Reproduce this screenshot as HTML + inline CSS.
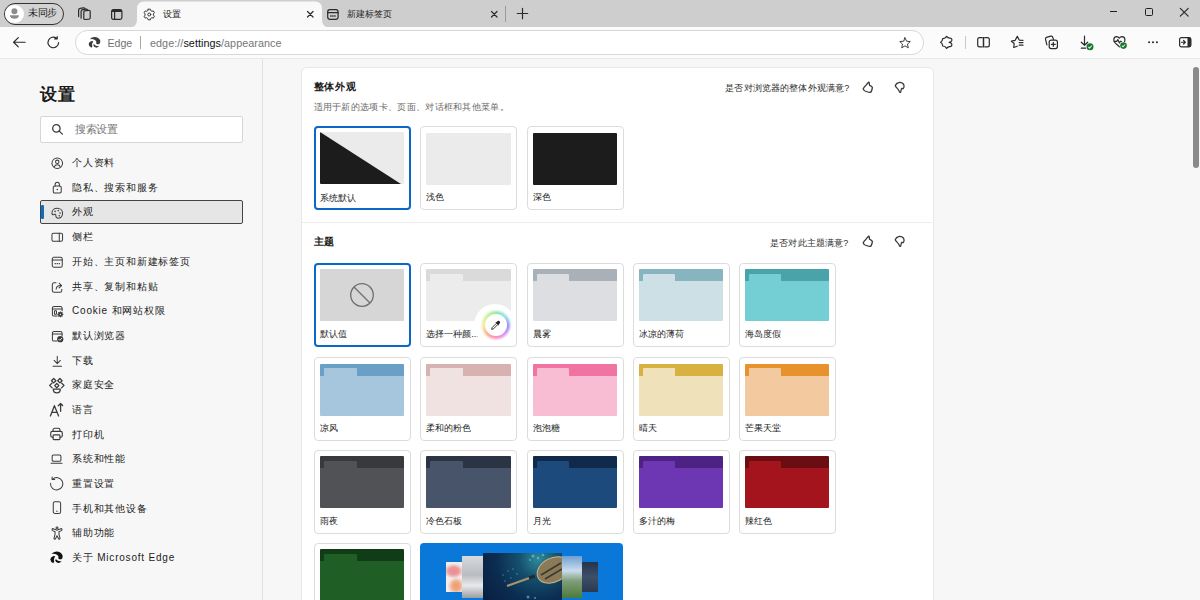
<!DOCTYPE html>
<html><head><meta charset="utf-8"><style>
*{box-sizing:border-box;margin:0;padding:0}
html,body{width:1200px;height:600px;overflow:hidden}
body{position:relative;background:#f7f7f7;font-family:"Liberation Sans",sans-serif;color:#242424}
.a{position:absolute}
svg{position:absolute;overflow:visible}
#tabstrip{left:0;top:0;width:1200px;height:27px;background:#cecece}
#toolbar{left:0;top:27px;width:1200px;height:31.8px;background:#fbfbfb;border-bottom:1px solid #e8e8e8}
#sidebar{left:0;top:58.5px;width:263px;height:542px;background:#f7f7f7;border-right:1px solid #e0e0e0}
.nt{position:absolute;left:72px;font-size:10px;letter-spacing:0.8px;line-height:14px;color:#1c1c1c;white-space:nowrap}
.ni{left:50.5px;width:12.5px;height:12.5px}
.s{fill:none;stroke:#3b3b3b;stroke-width:1.3;stroke-linecap:round;stroke-linejoin:round}
.f{fill:#3b3b3b}
#card{left:300.5px;top:67px;width:633px;height:600px;background:#fff;border:1px solid #e8e8e8;border-radius:6px}
.tc{position:absolute;width:97px;height:84px;border:1px solid #dcdcdc;border-radius:4px;background:#fff}
.tc .pv{position:absolute;left:5px;top:5.5px;width:84.3px;height:52px;border-radius:1px;overflow:hidden}
.tc .lb{position:absolute;left:5px;top:64px;font-size:9px;line-height:12px;color:#222;white-space:nowrap}
.tc.sel{border:2.3px solid #0b68c8}
.tc.sel .pv{left:3.7px;top:4.2px}
.tc.sel .lb{left:3.7px;top:63.3px}
.bar{position:absolute;left:0;top:0;width:100%;height:12px}
.tab{position:absolute;left:4px;top:4.5px;width:32.8px;height:8px;border-radius:1.2px 1.2px 0 0}
.body{position:absolute;left:0;top:12px;width:100%;height:40px}
.tb{fill:none;stroke:#2b2b2b;stroke-width:1.2;stroke-linecap:round;stroke-linejoin:round}
</style></head><body>
<div id="tabstrip" class="a"></div>
<svg style="left:129px;top:0" width="202" height="27" viewBox="0 0 202 27"><path d="M0 27.5 Q8 27.5 8 19.5 V9 Q8 1.5 15.5 1.5 H186 Q193 1.5 193 9 V19.5 Q193 27.5 201 27.5 Z" fill="#f9f9f9"/></svg>
<div id="toolbar" class="a"></div>
<div class="a" style="left:4px;top:2.8px;width:60.3px;height:22px;border:1.4px solid #333;border-radius:11px;background:#d3d3d3"></div>
<div class="a" style="left:5.2px;top:4.6px;width:18.5px;height:18.5px;border-radius:50%;background:#fff"></div>
<svg style="left:5.2px;top:4.6px" width="18.5" height="18.5" viewBox="0 0 18.5 18.5"><circle cx="9.4" cy="6.3" r="3" fill="#8b8b8b"/><path d="M4.9 10.3 H13.9 Q13.9 13.7 9.4 13.7 Q4.9 13.7 4.9 10.3 Z" fill="#8b8b8b"/></svg>
<div class="a" style="left:28.3px;top:6.3px;font-size:10px;letter-spacing:-0.6px;line-height:14px;color:#1a1a1a">未同步</div>
<svg style="left:74px;top:4px" width="22" height="20" viewBox="0 0 22 20"><path class="tb" stroke-width="1.15" d="M4.6 12.6 V6.2 Q4.6 4.6 6.2 4.3 L9.4 3.8 Q10.6 3.7 11 4.6"/><path class="tb" stroke-width="1.15" d="M7.1 14.2 V7.6 Q7.1 6 8.7 5.7 L12 5.2 Q13.1 5.1 13.6 6"/><path class="tb" stroke-width="1.25" d="M10.4 6.9 L14.8 6.4 Q16.2 6.3 16.2 7.7 V13.7 Q16.2 14.9 15 15.1 L11.2 15.5 Q9.8 15.6 9.8 14.3 V8.2 Q9.8 7 10.4 6.9 Z"/></svg>
<svg style="left:111px;top:8.5px" width="11.5" height="11" viewBox="0 0 11.5 11"><rect class="tb" x="0.6" y="0.6" width="10.3" height="9.8" rx="1.8" stroke-width="1.2"/><path d="M0.6 2.6 Q0.6 0.6 2.4 0.6 H9.1 Q10.9 0.6 10.9 2.6 V3 H0.6 Z" fill="#2b2b2b"/><path class="tb" d="M3.6 3 V10.4"/></svg>
<svg style="left:143px;top:8px" width="12.5" height="13" viewBox="0 0 16 16"><path class="tb" stroke-width="1.6" d="M6.6 1.2 H9.4 L9.9 3 L11.4 3.9 L13.2 3.4 L14.6 5.8 L13.3 7.2 V8.8 L14.6 10.2 L13.2 12.6 L11.4 12.1 L9.9 13 L9.4 14.8 H6.6 L6.1 13 L4.6 12.1 L2.8 12.6 L1.4 10.2 L2.7 8.8 V7.2 L1.4 5.8 L2.8 3.4 L4.6 3.9 L6.1 3 Z"/><circle class="tb" cx="8" cy="8" r="1.9" stroke-width="1.6"/></svg>
<div class="a" style="left:163px;top:8px;font-size:9px;line-height:13px;color:#1f1f1f">设置</div>
<svg style="left:307px;top:11px" width="6.5" height="6.5" viewBox="0 0 6.5 6.5"><path class="tb" stroke-width="1.2" d="M0.5 0.5 L6 6 M6 0.5 L0.5 6"/></svg>
<svg style="left:327.2px;top:8.5px" width="11.8" height="11" viewBox="0 0 11.8 11"><rect class="tb" x="0.7" y="0.7" width="10.4" height="9.6" rx="2.2" stroke-width="1.3"/><path class="tb" d="M0.7 3.7 H11.1" stroke-width="1.1"/><path d="M3.2 7 H8.6" stroke="#2b2b2b" stroke-width="1.4" stroke-dasharray="1.4 0.6"/></svg>
<div class="a" style="left:346.5px;top:8px;font-size:9px;line-height:13px;color:#1f1f1f">新建标签页</div>
<svg style="left:490.7px;top:11px" width="6.5" height="6.5" viewBox="0 0 6.5 6.5"><path class="tb" stroke-width="1.2" d="M0.5 0.5 L6 6 M6 0.5 L0.5 6"/></svg>
<div class="a" style="left:505.3px;top:6.3px;width:1px;height:15.7px;background:#9a9a9a"></div>
<svg style="left:517px;top:8px" width="11" height="11" viewBox="0 0 11 11"><path class="tb" stroke-width="1.2" d="M5.5 0.3 V10.7 M0.3 5.5 H10.7"/></svg>
<div class="a" style="left:1109.5px;top:11px;width:7.5px;height:1.2px;background:#1f1f1f"></div>
<div class="a" style="left:1145px;top:7.5px;width:8px;height:8px;border:1.2px solid #1f1f1f;border-radius:1.5px"></div>
<svg style="left:1180px;top:7.5px" width="8.5" height="8.5" viewBox="0 0 8.5 8.5"><path class="tb" stroke="#1f1f1f" stroke-width="1.1" d="M0.3 0.3 L8.2 8.2 M8.2 0.3 L0.3 8.2"/></svg>
<svg style="left:13px;top:37px" width="12.5" height="10.5" viewBox="0 0 12.5 10.5"><path class="tb" stroke-width="1.2" d="M12.2 5.25 H0.8 M5.3 0.6 L0.6 5.25 L5.3 9.9"/></svg>
<svg style="left:47px;top:36.2px" width="13" height="12.5" viewBox="0 0 13 12.5"><path class="tb" stroke-width="1.2" d="M11.6 6.5 A5.3 5.3 0 1 1 9.5 2.2 M10.2 0.5 V2.9 H7.7"/></svg>
<div class="a" style="left:75px;top:30.3px;width:849px;height:24.4px;background:#fff;border:1px solid #d8d8d8;border-radius:12.2px"></div>
<svg style="left:88.3px;top:35.7px" width="13" height="13" viewBox="0 0 16 16"><path d="M2.2 4 Q4.5 1.1 8 1.1 Q13.2 1.3 15.1 5.6 Q15.5 8.5 13.7 9.9 Q11.8 10.6 10.2 9.4 Q11 6.4 8.6 4.9 Q5.6 3.3 2.2 4 Z" fill="#3b3b3b"/><path d="M4.4 6.2 Q0.9 7.4 0.8 10.2 Q1 12.8 4.4 14.6 Q4.3 13.8 5.3 13.3 Q4.2 9.7 6.5 6.6 Q5.5 6.2 4.4 6.2 Z" fill="#3b3b3b"/><path d="M6.4 11.2 Q7 13.9 9.8 14.3 Q12.4 14.5 13.9 12.1 Q11.6 12.6 9.8 11.9 Q8.1 11.3 7.4 9.8 Z" fill="#3b3b3b"/></svg>
<div class="a" style="left:107.5px;top:35.8px;font-size:10.6px;line-height:15px;color:#707070">Edge</div>
<div class="a" style="left:140px;top:36px;width:1.2px;height:12.5px;background:#a8a8a8"></div>
<div class="a" style="left:150px;top:35.5px;font-size:10.8px;letter-spacing:0.05px;line-height:15px;color:#767676;white-space:nowrap">edge://<span style="color:#111">settings</span>/appearance</div>
<svg style="left:899px;top:37px" width="12" height="12" viewBox="0 0 16 16"><path class="tb" stroke="#555" stroke-width="1.2" d="M8 1 L10.1 5.6 L15 6.1 L11.3 9.4 L12.4 14.4 L8 11.8 L3.6 14.4 L4.7 9.4 L1 6.1 L5.9 5.6 Z"/></svg>
<svg style="left:936px;top:32px" width="20" height="20" viewBox="0 0 20 20"><path class="tb" stroke-width="1.3" d="M4.6 10.3 Q6.6 9.2 6.7 6.6 Q9.1 6.9 10.6 4.3 Q12 6.3 14.2 6 Q16.4 6.6 15.7 8.7 Q15.2 10 13.2 10.3 Q15.2 10.6 15.7 11.9 Q16.4 14 14.2 14.6 Q12 14.3 10.6 16.4 Q9.1 13.8 6.7 14 Q6.6 11.4 4.6 10.3 Z"/></svg>
<div class="a" style="left:964.5px;top:36px;width:1.2px;height:12.5px;background:#c8c8c8"></div>
<svg style="left:976.5px;top:37px" width="13" height="10.5" viewBox="0 0 13 10.5"><path class="tb" stroke-width="1.25" d="M5.2 0.7 H2.6 Q0.7 0.7 0.7 2.6 V7.9 Q0.7 9.8 2.6 9.8 H5.2 M7.8 0.7 H10.4 Q12.3 0.7 12.3 2.6 V7.9 Q12.3 9.8 10.4 9.8 H7.8"/><path d="M6.5 0 V10.5" stroke="#2b2b2b" stroke-width="1.5"/></svg>
<svg style="left:1007px;top:32px" width="22" height="20" viewBox="0 0 22 20"><path class="tb" stroke-width="1.25" d="M10.2 14.2 L6.7 15.5 L7.2 11.5 L4.4 9.2 L8.2 8.3 L10.3 4.4 L12.4 8.2 L16 8.3"/><path class="tb" stroke-width="1.25" stroke-linecap="butt" d="M12.2 10.6 H16 M12.2 13.2 H16"/></svg>
<svg style="left:1040px;top:32px" width="22" height="20" viewBox="0 0 22 20"><path class="tb" stroke-width="1.25" d="M6.9 12.9 L5.5 7.1 Q5.2 5.8 6.5 5.4 L10.8 4.2 Q12 3.9 12.6 5 L13.5 7.4"/><rect class="tb" stroke-width="1.3" x="9.2" y="8.1" width="8.2" height="8.5" rx="2"/><path class="tb" stroke-width="1.25" d="M13.3 10.4 V14.3 M11.35 12.35 H15.25"/></svg>
<svg style="left:1076px;top:32px" width="22" height="20" viewBox="0 0 22 20"><path class="tb" stroke-width="1.25" d="M8.5 4.2 V13.2 M5.3 10.2 L8.5 13.3 L11.7 10.2 M5.3 16.2 H9.6"/><circle cx="14" cy="14.8" r="3.5" fill="#1f7433"/><path d="M12.3 14.9 L13.5 16.1 L15.8 13.6" stroke="#c4f5cb" stroke-width="1.1" fill="none"/></svg>
<svg style="left:1112.5px;top:36px" width="14" height="13" viewBox="0 0 14 13"><path class="tb" stroke-width="1.25" d="M6.3 10.8 L1.9 6.6 Q0.6 5.2 0.8 3.4 Q1.2 0.8 3.7 0.7 Q5.4 0.7 6.3 2.2 Q7.3 0.7 9 0.7 Q11.6 0.8 11.9 3.4 Q12 4.5 11.6 5.5"/><path class="tb" stroke-width="1.1" d="M1.2 5.3 H3.7 L4.8 3.6 L6.4 7 L7.4 5.3 H8.4"/><circle cx="10.5" cy="9.6" r="3.3" fill="#1f7433"/><path d="M8.9 9.7 L10 10.8 L12.1 8.5" stroke="#c4f5cb" stroke-width="1.1" fill="none"/></svg>
<svg style="left:1147.5px;top:41.3px" width="10" height="2.5" viewBox="0 0 10 2.5"><circle cx="1.1" cy="1.2" r="1.05" fill="#2b2b2b"/><circle cx="5" cy="1.2" r="1.05" fill="#2b2b2b"/><circle cx="8.9" cy="1.2" r="1.05" fill="#2b2b2b"/></svg>
<svg style="left:1178.7px;top:37.3px" width="12.5" height="10.5" viewBox="0 0 12.5 10.5"><rect class="tb" stroke-width="1.2" x="0.6" y="0.6" width="11.3" height="9.3" rx="1.8"/><path d="M8.5 0.6 H10.1 Q11.9 0.6 11.9 2.4 V8.1 Q11.9 9.9 10.1 9.9 H8.5 Z" fill="#2b2b2b"/><path class="tb" stroke-width="1.1" d="M2.5 5.25 H6.3 M4.6 3.5 L6.3 5.25 L4.6 7"/></svg>
<div id="sidebar" class="a"></div>
<div class="a" style="left:40px;top:83px;font-size:17px;letter-spacing:0.8px;line-height:23px;font-weight:bold;color:#1a1a1a">设置</div>
<div class="a" style="left:39.5px;top:116px;width:203.7px;height:26.5px;background:#fff;border:1px solid #d6d6d6;border-radius:2px"></div>
<svg style="left:51.6px;top:124.3px" width="11" height="10.5" viewBox="0 0 11 10.5"><circle cx="4.4" cy="4.4" r="3.7" class="s" stroke-width="1.25"/><path d="M7.2 7.1 L10.4 10.1" class="s" stroke-width="1.25"/></svg>
<div class="a" style="left:75px;top:121.5px;font-size:11px;letter-spacing:-0.5px;line-height:14px;color:#777">搜索设置</div>
<div class="a" style="left:40px;top:200.2px;width:203px;height:23.4px;background:#e6e6e6;border:1.5px solid #444;border-radius:2px"></div>
<div class="a" style="left:41.2px;top:204.8px;width:2.5px;height:14.6px;background:#0f6cbd;border-radius:1px"></div>
<div class="nt" style="top:156.10px">个人资料</div>
<svg class="ni" style="top:157.35px" viewBox="0 0 16 16"><circle class="s" cx="8" cy="8" r="6.8"/><circle class="s" cx="8" cy="6.2" r="2.2"/><path class="s" d="M4.2 12.6 Q5 10 8 10 Q11 10 11.8 12.6"/></svg>
<div class="nt" style="top:180.79px">隐私、搜索和服务</div>
<svg class="ni" style="top:182.04px" viewBox="0 0 16 16"><path class="s" d="M5.3 5.2 V3 A2.7 2.7 0 0 1 10.7 3 V5.2"/><rect class="s" x="2.9" y="5.2" width="10.2" height="8.8" rx="1.8"/><circle class="f" cx="8" cy="9.6" r="1"/></svg>
<div class="nt" style="top:205.48px">外观</div>
<svg class="ni" style="top:206.73px" viewBox="0 0 16 16"><path class="s" d="M8 1.6 C4 1.6 1.2 4.2 1.2 7.6 C1.2 9.6 2.4 10.2 3.6 9.6 C4.9 8.9 6.2 9.3 6.2 10.8 C6.2 13.3 7.6 14.6 9.6 14.4 C12.6 14 14.8 11.3 14.8 8 C14.8 4.2 11.8 1.6 8 1.6 Z"/><circle class="f" cx="5.2" cy="5.6" r="1"/><circle class="f" cx="9.2" cy="4.6" r="1"/><circle class="f" cx="11.6" cy="7.8" r="1"/><circle class="f" cx="10.6" cy="11.2" r="1"/></svg>
<div class="nt" style="top:230.17px">侧栏</div>
<svg class="ni" style="top:231.42px" viewBox="0 0 16 16"><rect class="s" x="1.2" y="2.8" width="13.6" height="10.4" rx="2"/><path class="s" d="M10.6 2.8 V13.2"/></svg>
<div class="nt" style="top:254.86px">开始、主页和新建标签页</div>
<svg class="ni" style="top:256.11px" viewBox="0 0 16 16"><rect class="s" x="1.6" y="1.6" width="12.8" height="12.8" rx="2.2"/><path class="s" d="M1.6 5.2 H14.4"/><path d="M4.6 9.6 H11.4" stroke="#3b3b3b" stroke-width="1.6" stroke-dasharray="1.6 1"/></svg>
<div class="nt" style="top:279.55px">共享、复制和粘贴</div>
<svg class="ni" style="top:280.80px" viewBox="0 0 16 16"><path class="s" d="M6.4 2.2 H4 A2.3 2.3 0 0 0 1.7 4.5 V12 A2.3 2.3 0 0 0 4 14.3 H11.5 A2.3 2.3 0 0 0 13.8 12 V10.6"/><path class="s" d="M6.6 10.4 C6.8 7.2 8.8 5.8 12.6 5.8"/><path class="s" d="M10.4 2.8 L13.6 5.8 L10.4 8.8"/></svg>
<div class="nt" style="top:304.24px">Cookie 和网站权限</div>
<svg class="ni" style="top:305.49px" viewBox="0 0 16 16"><path class="s" d="M8 14.2 H4 A2.2 2.2 0 0 1 1.8 12 V4 A2.2 2.2 0 0 1 4 1.8 H12 A2.2 2.2 0 0 1 14.2 4 V7.4"/><path class="s" d="M1.8 5 H14.2"/><rect class="s" x="4.4" y="7.4" width="2.6" height="4.4" rx="0.6"/><circle class="f" cx="12" cy="12" r="2.9"/><circle cx="12" cy="12" r="1" fill="#f7f7f7"/><path d="M12 8.2 V15.8 M8.2 12 H15.8 M9.3 9.3 L14.7 14.7 M14.7 9.3 L9.3 14.7" stroke="#3b3b3b" stroke-width="1.3"/><circle class="f" cx="12" cy="12" r="2.4"/><circle cx="12" cy="12" r="0.9" fill="#f7f7f7"/></svg>
<div class="nt" style="top:328.93px">默认浏览器</div>
<svg class="ni" style="top:330.18px" viewBox="0 0 16 16"><path class="s" d="M7.6 14.2 H4 A2.2 2.2 0 0 1 1.8 12 V4 A2.2 2.2 0 0 1 4 1.8 H12 A2.2 2.2 0 0 1 14.2 4 V7.4"/><path class="s" d="M1.8 5 H14.2"/><circle class="f" cx="11.8" cy="11.8" r="4"/><path d="M10 11.9 L11.3 13.2 L13.7 10.6" stroke="#f7f7f7" stroke-width="1.2" fill="none" stroke-linecap="round"/></svg>
<div class="nt" style="top:353.62px">下载</div>
<svg class="ni" style="top:354.87px" viewBox="0 0 16 16"><path class="s" d="M8 1.5 V11 M4 7 L8 11 L12 7 M2.5 14.5 H13.5"/></svg>
<div class="nt" style="top:378.31px">家庭安全</div>
<svg style="left:46px;top:373.81px" width="22" height="24" viewBox="0 0 22 24"><g class="s" stroke-width="1.15" transform="translate(0 1.6)"><path d="M7.7 2.9 L9.9 5.1 L7.7 7.3 L5.5 5.1 Z"/><path d="M13.9 2.9 L16.1 5.1 L13.9 7.3 L11.7 5.1 Z"/><path d="M10.8 7.9 L12.9 10 L10.8 12.1 L8.7 10 Z"/><path d="M5.9 7.6 L3.6 9.8 L6.1 12.3 M15.7 7.6 L18 9.8 L15.5 12.3"/><path d="M7.3 13.6 H14.3 Q14.3 17.2 10.8 17.2 Q7.3 17.2 7.3 13.6 Z"/></g></svg>
<div class="nt" style="top:403.00px">语言</div>
<svg style="left:46px;top:398.50px" width="22" height="24" viewBox="0 0 22 24"><g class="s" stroke-width="1.15" transform="translate(0 -0.7)"><path d="M4.4 17.6 L8.4 7.4 L12.6 17.6 M5.9 14 H11.1"/><path d="M14.6 13 V5.4 M12.3 7.4 L14.6 5.2 L16.6 7.2"/></g></svg>
<div class="nt" style="top:427.69px">打印机</div>
<svg class="ni" style="top:428.94px" viewBox="0 0 16 16"><g transform="translate(-1.9 -2.6) scale(1.12)"><path class="s" d="M4 5 V3.5 A2 2 0 0 1 6 1.5 H10 A2 2 0 0 1 12 3.5 V5"/><path class="s" d="M4 11.8 H3.2 A1.8 1.8 0 0 1 1.4 10 V6.8 A1.8 1.8 0 0 1 3.2 5 H12.8 A1.8 1.8 0 0 1 14.6 6.8 V10 A1.8 1.8 0 0 1 12.8 11.8 H12"/><rect class="s" x="4" y="9" width="8" height="5.5" rx="1.2"/></g></svg>
<div class="nt" style="top:452.38px">系统和性能</div>
<svg class="ni" style="top:453.63px" viewBox="0 0 16 16"><g transform="translate(-0.9 -1.7)"><rect class="s" x="2.4" y="3" width="11.2" height="8" rx="1.6"/><path class="s" d="M1 13.4 H15"/></g></svg>
<div class="nt" style="top:477.07px">重置设置</div>
<svg class="ni" style="top:478.32px" viewBox="0 0 16 16"><path class="s" stroke-width="1.3" d="M1.9 1.6 A7.9 7.9 0 1 1 -0.6 6.6"/><path class="s" stroke-width="1.3" d="M1.4 -1.3 V1.9 H4.7"/></svg>
<div class="nt" style="top:501.76px">手机和其他设备</div>
<svg class="ni" style="top:503.01px" viewBox="0 0 16 16"><rect class="s" stroke-width="1.35" x="2.9" y="-1.6" width="9.4" height="15" rx="2.3"/><circle class="f" cx="7.6" cy="10.6" r="0.9"/></svg>
<div class="nt" style="top:526.45px">辅助功能</div>
<svg class="ni" style="top:527.70px" viewBox="0 0 16 16"><path class="s" stroke-width="1.4" d="M2.2 0.6 Q4 1.9 6.1 1.9 Q6.8 3 7.7 3 Q8.6 3 9.3 1.9 Q11.4 1.9 13.2 0.6 Q14.4 1 14 2.6 Q12.2 4.1 10.2 4.6 L10.3 8.6 L11.6 13.2 Q11.2 14.6 9.8 14.2 L7.7 10 L5.6 14.2 Q4.2 14.6 3.8 13.2 L5.1 8.6 L5.2 4.6 Q3.2 4.1 1.4 2.6 Q1 1 2.2 0.6 Z"/><circle class="s" stroke-width="1.1" cx="7.7" cy="-0.1" r="1.25"/></svg>
<div class="nt" style="top:551.14px">关于 Microsoft Edge</div>
<svg style="left:46px;top:546.64px" width="22" height="24" viewBox="0 0 22 24"><svg x="3.6" y="3.6" width="13.8" height="13.8" viewBox="0 0 16 16"><path d="M2.2 4 Q4.5 1.1 8 1.1 Q13.2 1.3 15.1 5.6 Q15.5 8.5 13.7 9.9 Q11.8 10.6 10.2 9.4 Q11 6.4 8.6 4.9 Q5.6 3.3 2.2 4 Z" fill="#111"/><path d="M4.4 6.2 Q0.9 7.4 0.8 10.2 Q1 12.8 4.4 14.6 Q4.3 13.8 5.3 13.3 Q4.2 9.7 6.5 6.6 Q5.5 6.2 4.4 6.2 Z" fill="#111"/><path d="M6.4 11.2 Q7 13.9 9.8 14.3 Q12.4 14.5 13.9 12.1 Q11.6 12.6 9.8 11.9 Q8.1 11.3 7.4 9.8 Z" fill="#111"/></svg></svg>
<div id="card" class="a"></div>
<div class="a" style="left:313.5px;top:80px;font-size:10px;letter-spacing:0.95px;line-height:14px;font-weight:bold;color:#1a1a1a">整体外观</div>
<div class="a" style="left:313.5px;top:101px;font-size:9px;letter-spacing:0.31px;line-height:12px;color:#6a6a6a">适用于新的选项卡、页面、对话框和其他菜单。</div>
<div class="a" style="right:350.70000000000005px;top:81.5px;font-size:9px;letter-spacing:0.15px;line-height:12px;color:#2e2e2e;white-space:nowrap">是否对浏览器的整体外观满意?</div>
<svg style="left:858px;top:77.6px" width="52" height="20" viewBox="0 0 52 20"><path class="s" stroke="#333" stroke-width="1.15" d="M10.8 4.1 Q11.7 4.7 11.4 6.6 L11.6 7.3 Q13.8 8 14.4 9.4 Q14.2 11.8 13.1 13.9 Q11.6 14.8 9.8 14 L7 13 Q5.2 12.3 5.2 10.6 Q6 9.2 8 7.2 Q9.8 5 10.8 4.1 Z"/><path class="s" stroke="#333" stroke-width="1.15" d="M37.3 7.4 Q38.6 4.9 41.5 4.4 Q44.6 4.3 45.8 6.8 Q46.6 9.4 45.3 10.6 L43.6 10.4 Q42.9 12.8 42.6 14.3 Q42 14.7 41.4 13.6 Q40.4 11.4 38.6 9.6 Q37.2 8.6 37.3 7.4 Z"/></svg>
<div class="a" style="left:302px;top:222px;width:630px;height:1px;background:#ececec"></div>
<div class="a" style="right:351.5px;top:237.2px;font-size:9px;letter-spacing:0.15px;line-height:12px;color:#2e2e2e;white-space:nowrap">是否对此主题满意?</div>
<svg style="left:858px;top:232px" width="52" height="20" viewBox="0 0 52 20"><path class="s" stroke="#333" stroke-width="1.15" d="M10.8 4.1 Q11.7 4.7 11.4 6.6 L11.6 7.3 Q13.8 8 14.4 9.4 Q14.2 11.8 13.1 13.9 Q11.6 14.8 9.8 14 L7 13 Q5.2 12.3 5.2 10.6 Q6 9.2 8 7.2 Q9.8 5 10.8 4.1 Z"/><path class="s" stroke="#333" stroke-width="1.15" d="M37.3 7.4 Q38.6 4.9 41.5 4.4 Q44.6 4.3 45.8 6.8 Q46.6 9.4 45.3 10.6 L43.6 10.4 Q42.9 12.8 42.6 14.3 Q42 14.7 41.4 13.6 Q40.4 11.4 38.6 9.6 Q37.2 8.6 37.3 7.4 Z"/></svg>
<div class="a" style="left:313.5px;top:235px;font-size:10px;letter-spacing:0.95px;line-height:14px;font-weight:bold;color:#1a1a1a">主题</div>
<div class="tc sel" style="left:314px;top:126.3px"><div class="pv"><div style="position:absolute;inset:0;background:#ebebeb"></div><svg style="left:0;top:0" width="85" height="52"><path d="M0 0 L81 52 L0 52 Z" fill="#1c1c1c"/></svg></div><div class="lb">系统默认</div></div>
<div class="tc" style="left:420.3px;top:126.3px"><div class="pv"><div style="position:absolute;inset:0;background:#ebebeb"></div></div><div class="lb">浅色</div></div>
<div class="tc" style="left:526.5px;top:126.3px"><div class="pv"><div style="position:absolute;inset:0;background:#1c1c1c"></div></div><div class="lb">深色</div></div>
<div class="tc sel" style="left:314px;top:262.5px"><div class="pv"><div style="position:absolute;inset:0;background:#d6d6d6"></div><svg style="left:29.5px;top:13px" width="26" height="26" viewBox="0 0 26 26"><circle cx="13" cy="13" r="11.3" fill="none" stroke="#6e6e6e" stroke-width="1.3"/><path d="M5 5 L21 21" stroke="#6e6e6e" stroke-width="1.3"/></svg></div><div class="lb">默认值</div></div>
<div class="tc" style="left:420.3px;top:262.5px"><div class="pv"><div class="bar" style="background:#dadada"></div><div class="body" style="background:#ececec"></div><div class="tab" style="background:#ececec"></div></div><div class="lb">选择一种颜...</div><div style="position:absolute;left:53px;top:40px;width:42px;height:42px;border-radius:50%;background:#fff"></div><div style="position:absolute;left:60.5px;top:47px;width:28px;height:28px;border-radius:50%;background:conic-gradient(from 0deg,#8de8a6 0deg,#8ee0ee 50deg,#9a90f6 95deg,#da92f2 140deg,#ff8fb2 185deg,#ffac8c 225deg,#f7ee94 270deg,#c4f094 320deg,#8de8a6 360deg);filter:blur(1.2px)"></div><div style="position:absolute;left:63.5px;top:50px;width:22px;height:22px;border-radius:50%;background:#fff;filter:blur(0.4px)"></div><svg style="left:69px;top:56px" width="11" height="11" viewBox="0 0 16 16"><path d="M11 1.5 Q12.5 0.3 14 1.8 Q15.5 3.3 14.3 4.8 L12.6 6.5 L13.1 7 L12 8.1 L7.9 4 L9 2.9 L9.5 3.4 Z" fill="#222"/><path d="M9 5.1 L3 11.1 L2.4 13.6 L4.9 13 L10.9 7" fill="none" stroke="#222" stroke-width="1.3"/></svg></div>
<div class="tc" style="left:526.5px;top:262.5px"><div class="pv"><div class="bar" style="background:#aab0b7"></div><div class="body" style="background:#dcdee2"></div><div class="tab" style="background:#dcdee2"></div></div><div class="lb">晨雾</div></div>
<div class="tc" style="left:632.5px;top:262.5px"><div class="pv"><div class="bar" style="background:#86b5bf"></div><div class="body" style="background:#cde0e5"></div><div class="tab" style="background:#cde0e5"></div></div><div class="lb">冰凉的薄荷</div></div>
<div class="tc" style="left:738.6px;top:262.5px"><div class="pv"><div class="bar" style="background:#4aa3a8"></div><div class="body" style="background:#73cfd3"></div><div class="tab" style="background:#73cfd3"></div></div><div class="lb">海岛度假</div></div>
<div class="tc" style="left:314px;top:357.3px"><div class="pv"><div class="bar" style="background:#6a9fc7"></div><div class="body" style="background:#a6c6de"></div><div class="tab" style="background:#a6c6de"></div></div><div class="lb">凉风</div></div>
<div class="tc" style="left:420.3px;top:357.3px"><div class="pv"><div class="bar" style="background:#d8b2b0"></div><div class="body" style="background:#f0e2e1"></div><div class="tab" style="background:#f0e2e1"></div></div><div class="lb">柔和的粉色</div></div>
<div class="tc" style="left:526.5px;top:357.3px"><div class="pv"><div class="bar" style="background:#ef74a2"></div><div class="body" style="background:#f8bcd3"></div><div class="tab" style="background:#f8bcd3"></div></div><div class="lb">泡泡糖</div></div>
<div class="tc" style="left:632.5px;top:357.3px"><div class="pv"><div class="bar" style="background:#d8b140"></div><div class="body" style="background:#efe2bb"></div><div class="tab" style="background:#efe2bb"></div></div><div class="lb">晴天</div></div>
<div class="tc" style="left:738.6px;top:357.3px"><div class="pv"><div class="bar" style="background:#e8922e"></div><div class="body" style="background:#f3caa0"></div><div class="tab" style="background:#f3caa0"></div></div><div class="lb">芒果天堂</div></div>
<div class="tc" style="left:314px;top:449.5px"><div class="pv"><div class="bar" style="background:#37393d"></div><div class="body" style="background:#505256"></div><div class="tab" style="background:#505256"></div></div><div class="lb">雨夜</div></div>
<div class="tc" style="left:420.3px;top:449.5px"><div class="pv"><div class="bar" style="background:#2b3444"></div><div class="body" style="background:#475469"></div><div class="tab" style="background:#475469"></div></div><div class="lb">冷色石板</div></div>
<div class="tc" style="left:526.5px;top:449.5px"><div class="pv"><div class="bar" style="background:#11294b"></div><div class="body" style="background:#1d4a7c"></div><div class="tab" style="background:#1d4a7c"></div></div><div class="lb">月光</div></div>
<div class="tc" style="left:632.5px;top:449.5px"><div class="pv"><div class="bar" style="background:#4c2384"></div><div class="body" style="background:#6d37b3"></div><div class="tab" style="background:#6d37b3"></div></div><div class="lb">多汁的梅</div></div>
<div class="tc" style="left:738.6px;top:449.5px"><div class="pv"><div class="bar" style="background:#6b0e13"></div><div class="body" style="background:#a3141c"></div><div class="tab" style="background:#a3141c"></div></div><div class="lb">辣红色</div></div>
<div class="tc" style="left:314px;top:542.5px"><div class="pv"><div class="bar" style="background:#113d16"></div><div class="body" style="background:#1f5f26"></div><div class="tab" style="background:#1f5f26"></div></div><div class="lb"></div></div>
<div class="a" style="left:420.3px;top:542.5px;width:203px;height:80px;background:#0a78d8;border-radius:4px;overflow:hidden"><div class="a" style="left:26px;top:19px;width:16.5px;height:30.5px;background:radial-gradient(ellipse 60% 25% at 45% 30%,#e98b90 0%,#ec9a9c 50%,transparent 100%),radial-gradient(ellipse 50% 30% at 60% 80%,#ee9a6c 0%,#f0ad8c 50%,transparent 100%),#f3ecea"></div><div class="a" style="left:42px;top:13.5px;width:21px;height:42px;background:linear-gradient(180deg,#d8dadc 0%,#b9bcc0 45%,#e8e9ea 70%,#9a9ea2 100%)"></div><div class="a" style="left:141.5px;top:13.5px;width:20.5px;height:42px;background:linear-gradient(180deg,#6f9fd0 0%,#c9dced 35%,#7f9d78 60%,#4d7a3c 100%)"></div><div class="a" style="left:161.5px;top:19.5px;width:16px;height:29.5px;background:linear-gradient(180deg,#26344a 0%,#3d5068 50%,#2a3850 100%)"></div><div class="a" style="left:62.5px;top:10px;width:79px;height:60px;overflow:hidden;background:radial-gradient(ellipse at 70% 10%,#2f8a9a 0%,#15506e 25%,#0b2c50 55%,#071a3a 100%)"><svg style="left:0;top:0" width="79" height="50" viewBox="0 0 79 50"><g opacity="0.55" fill="#7fd6d8"><circle cx="50" cy="3" r="1.6"/><circle cx="55" cy="5" r="1.2"/><circle cx="47" cy="7" r="1"/><circle cx="60" cy="2" r="1.3"/><circle cx="45" cy="44" r="1.5"/><circle cx="52" cy="45" r="1.1"/></g><g opacity="0.35" fill="#5fb3c8"><circle cx="20" cy="22" r="1"/><circle cx="25" cy="18" r="1"/><circle cx="30" cy="16" r="1"/><circle cx="22" cy="28" r="1"/><circle cx="28" cy="25" r="1"/><circle cx="34" cy="21" r="1"/></g><path d="M24 33 L52 23" stroke="#a8946c" stroke-width="2.2"/><path d="M46 25 L52 23" stroke="#1c2a38" stroke-width="3"/><ellipse cx="70" cy="18" rx="17" ry="12" fill="#8a7a58" stroke="#c9b68a" stroke-width="1" transform="rotate(-28 68 17)"/><path d="M58 22 L78 10 M62 26 L79 16" stroke="#3c3a30" stroke-width="1.6"/></svg></div></div>
<div class="a" style="left:1192.6px;top:67px;width:6.4px;height:101px;background:#8a8a8a;border-radius:3.2px"></div>
</body></html>
